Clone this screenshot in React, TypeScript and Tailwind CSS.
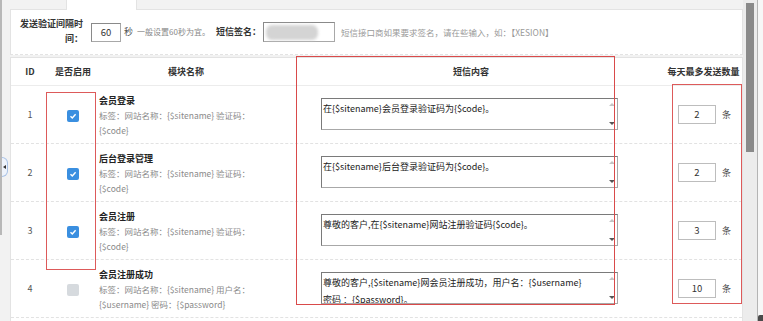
import React from "react";

const rows = [
  {
    id: 1,
    on: true,
    title: "会员登录",
    tags: ["标签：网站名称：{$sitename} 验证码：", "{$code}"],
    content: ["在{$sitename}会员登录验证码为{$code}。"],
    count: "2",
  },
  {
    id: 2,
    on: true,
    title: "后台登录管理",
    tags: ["标签：网站名称：{$sitename} 验证码：", "{$code}"],
    content: ["在{$sitename}后台登录验证码为{$code}。"],
    count: "2",
  },
  {
    id: 3,
    on: true,
    title: "会员注册",
    tags: ["标签：网站名称：{$sitename} 验证码：", "{$code}"],
    content: ["尊敬的客户,在{$sitename}网站注册验证码{$code}。"],
    count: "3",
  },
  {
    id: 4,
    on: false,
    title: "会员注册成功",
    tags: ["标签：网站名称：{$sitename} 用户名：", "{$username} 密码：{$password}"],
    content: ["尊敬的客户,{$sitename}网会员注册成功，用户名：{$username}", "密码 ：{$password}。"],
    count: "10",
  },
];

function Checkbox({ on }: { on: boolean }) {
  if (!on) return <div className="w-[12px] h-[12px] rounded-[2px] bg-[#d6dade] mt-[3px]" />;
  return (
    <div className="w-[12px] h-[12px] rounded-[2px] bg-[#3a8fe0] flex items-center justify-center mt-[3px]">
      <svg width="8" height="8" viewBox="0 0 8 8">
        <polyline points="1.5,4.2 3.3,6 6.6,2.2" fill="none" stroke="#fff" strokeWidth="1.4" />
      </svg>
    </div>
  );
}

function FakeTextarea({ lines }: { lines: string[] }) {
  return (
    <div className="w-[297px] h-[32px] flex bg-white border border-[#a8a8a8] border-t-[#7a7a7a] border-l-[#7a7a7a] overflow-hidden">
      <div className="flex-1 pl-[1px] pt-[1px] text-[9px] leading-[17px] text-[#222] overflow-hidden whitespace-nowrap">
        {lines.map((l, i) => (
          <div key={i}>{l}</div>
        ))}
      </div>
      <div className="w-[10px] flex flex-col justify-between items-center py-[4px]">
        <div className="w-0 h-0 border-x-[3px] border-x-transparent border-b-[3px] border-b-[#c4c4c4]" />
        <div className="w-0 h-0 border-x-[3px] border-x-transparent border-t-[3px] border-t-[#555]" />
      </div>
    </div>
  );
}

export default function App() {
  return (
    <div
      className="relative w-[763px] h-[321px] overflow-hidden bg-[#f2f2f2] flex text-[#333]"
      style={{ fontFamily: '"Noto Sans CJK SC", "Noto Sans", sans-serif' }}
    >
      {/* left gutter */}
      <div className="w-[10px] h-full flex">
        <div className="w-[2px] h-[235px] bg-[#b8b8b8]" />
        <div className="flex-1 flex flex-col">
          <div className="h-[157px]" />
          <div className="w-[6px] h-[20px] rounded-r-full border border-l-0 border-[#a9c2e6] bg-[#eef3fb] flex items-center justify-center">
            <div className="w-0 h-0 border-y-[2.5px] border-y-transparent border-r-[3px] border-r-[#333]" />
          </div>
        </div>
      </div>

      {/* main */}
      <div className="w-[733px] h-full flex flex-col">
        {/* tab row */}
        <div className="h-[10px] flex">
          <div className="w-[56px] border-b border-[#e3e3e3]" />
          <div className="w-[71px] bg-white border-x border-[#e3e3e3]" />
          <div className="flex-1 border-b border-[#e3e3e3]" />
        </div>
        {/* settings panel */}
        <div className="h-[45px] bg-white border-x border-b border-[#e3e3e3] [border-bottom-style:dashed] flex items-center pl-[9px] text-[9px]">
          <div className="w-[63px] text-right font-bold leading-[15px] text-[#333] -mt-[2px]">发送验证间隔时间：</div>
          <div className="ml-[8px] w-[30px] h-[19px] border border-[#a8a8a8] border-t-[#8a8a8a] border-l-[#8a8a8a] flex items-center justify-center text-[9.5px] text-[#333]">
            60
          </div>
          <span className="ml-[3px] text-[#555]">秒</span>
          <span className="ml-[4px] text-[#888] text-[8px]">一般设置60秒为宜。</span>
          <span className="ml-[6px] font-bold text-[#333]">短信签名：</span>
          <div className="ml-[2px] w-[72px] h-[20px] border border-[#a8a8a8] border-t-[#8a8a8a] border-l-[#8a8a8a] flex items-center pl-[2px]">
            <div className="w-[52px] h-[15px] rounded-[6px] bg-[#d4d4d4] blur-[1.5px]" />
          </div>
          <span className="ml-[6px] text-[#999] text-[8.5px]">短信接口商如果要求签名，请在些输入，如：【XESION】</span>
        </div>
        <div className="h-[2px]" />
        {/* table panel */}
        <div className="flex-1 bg-white border-x border-t border-[#e3e3e3]">
          <div className="h-[28px] grid grid-cols-[38px_48px_178px_392px_77px] items-center border-b border-[#ececec] text-[9px] font-bold text-[#333]">
            <div className="text-center">ID</div>
            <div className="text-center">是否启用</div>
            <div className="text-center">模块名称</div>
            <div className="text-center">短信内容</div>
            <div className="text-center pr-[4px]">每天最多发送数量</div>
          </div>
          {rows.map((r) => (
            <div
              key={r.id}
              className="h-[58px] grid grid-cols-[38px_48px_178px_392px_77px] items-center border-b border-dashed border-[#e2e2e2]"
            >
              <div className="text-center text-[9px] text-[#555]">{r.id}</div>
              <div className="flex justify-center">
                <Checkbox on={r.on} />
              </div>
              <div className="pl-[2px] h-full pt-[7px] flex flex-col">
                <div className="text-[9px] leading-[15px] font-bold text-[#222]">{r.title}</div>
                {r.tags.map((t, i) => (
                  <div key={i} className="text-[8.5px] leading-[15px] text-[#8a8a8a] whitespace-nowrap">
                    {t}
                  </div>
                ))}
              </div>
              <div className="pl-[46px] -mt-[2px]">
                <FakeTextarea lines={r.content} />
              </div>
              <div className="pl-[11px] flex items-center">
                <div className="w-[38px] h-[19px] border border-[#bdbdbd] flex items-center justify-center text-[9.5px] text-[#333]">
                  {r.count}
                </div>
                <span className="ml-[6px] text-[9px] text-[#444]">条</span>
              </div>
            </div>
          ))}
        </div>
      </div>

      {/* right scrollbar */}
      <div className="w-[20px] h-full flex">
        <div className="w-[3px] bg-[#ececec]" />
        <div className="w-[8px] bg-[#ececec] flex flex-col">
          <div className="h-[3px]" />
          <div className="h-[149px] bg-[#8a8a8a]" />
        </div>
        <div className="w-[3px] bg-[#ececec]" />
        <div className="w-[1px] bg-[#b4b4b4]" />
        <div className="flex-1 bg-[#f7f7f7] flex flex-col justify-end">
          <div className="h-[6px] bg-[#4a4a4a] rounded-tl-[2px]" />
        </div>
      </div>

      {/* red annotation boxes */}
      <div className="absolute left-[46px] top-[92px] w-[50px] h-[178px] border border-[#dd5a5a] pointer-events-none" />
      <div className="absolute left-[296px] top-[56px] w-[319px] h-[249px] border border-[#d94a4a] pointer-events-none" />
      <div className="absolute left-[672px] top-[84px] w-[70px] h-[220px] border border-[#dd5a5a] pointer-events-none" />
    </div>
  );
}
